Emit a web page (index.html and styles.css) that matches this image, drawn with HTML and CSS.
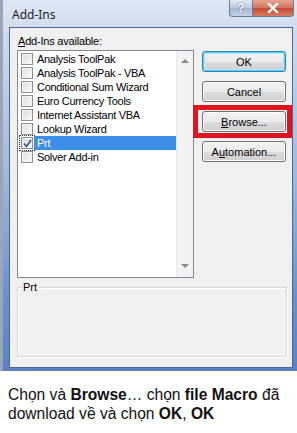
FILE: index.html
```html
<!DOCTYPE html>
<html lang="vi">
  <head>
    <meta charset="UTF-8" />
    <meta name="viewport" content="width=device-width, initial-scale=1.0" />
    <title>Add-Ins</title>
    <link rel="stylesheet" href="styles.css">
  </head>
  <body>
    <div class="dialog">
      <div class="titlebar">
        <span class="title">Add-Ins</span>
        <div class="controls">
          <span class="help">?</span>
          <span class="close">
            <svg width="12" height="10" viewBox="0 0 12 10">
              <path d="M2 1 L10 9 M10 1 L2 9" stroke="#fff" stroke-width="2.4" stroke-linecap="square" />
            </svg>
          </span>
        </div>
      </div>

      <div class="client">
        <div class="top">
          <div class="left">
            <p class="label"><u>A</u>dd-Ins available:</p>
            <div class="listbox">
              <ul class="items">
                <li><span class="box"></span><span class="name">Analysis ToolPak</span></li>
                <li><span class="box"></span><span class="name">Analysis ToolPak - VBA</span></li>
                <li><span class="box"></span><span class="name">Conditional Sum Wizard</span></li>
                <li><span class="box"></span><span class="name">Euro Currency Tools</span></li>
                <li><span class="box"></span><span class="name">Internet Assistant VBA</span></li>
                <li><span class="box"></span><span class="name">Lookup Wizard</span></li>
                <li class="selected">
                  <span class="box checked">
                    <svg width="9" height="9" viewBox="0 0 9 9">
                      <path d="M1 4.5 L3.5 7.5 L8 1" fill="none" stroke="#2a4f9a" stroke-width="1.6" />
                    </svg>
                  </span>
                  <span class="name">Prt</span>
                </li>
                <li><span class="box"></span><span class="name">Solver Add-in</span></li>
              </ul>
              <div class="scrollbar">
                <span class="arrow up"></span>
                <span class="arrow down"></span>
              </div>
            </div>
          </div>

          <div class="buttons">
            <button class="default">OK</button>
            <button>Cancel</button>
            <button class="marked"><u>B</u>rowse...</button>
            <button>A<u>u</u>tomation...</button>
          </div>
        </div>

        <fieldset class="group">
          <legend>Prt</legend>
        </fieldset>
      </div>
    </div>

    <p class="caption">Chọn và <b>Browse</b>… chọn <b>file Macro</b> đã<br>download về và chọn <b>OK</b>, <b>OK</b></p>
  </body>
</html>
```

FILE: styles.css
```css
* {
  margin: 0;
  padding: 0;
  box-sizing: border-box;
}
body {
  background: #fff;
  font-family: "Liberation Sans", Arial, sans-serif;
}
.dialog {
  width: 297px;
  height: 371px;
  border-left: 3px solid #9aa6b8;
  padding-right: 4px;
  padding-bottom: 3px;
  padding-left: 6px;
  background: linear-gradient(#dde6f3 0, #cbd9ec 40px, #9db7dc 180px, #6a8fca 300px, #5a82c4 100%);
  display: flex;
  flex-direction: column;
}
.titlebar {
  height: 27px;
  display: flex;
  justify-content: space-between;
  margin-left: -6px;
  margin-right: -1px;
}
.title {
  padding-left: 9px;
  align-self: center;
  font-family: "Noto Sans", "Liberation Sans", sans-serif;
  font-size: 12px;
  color: #1e1e1e;
  padding-top: 1px;
}
.controls {
  display: flex;
  height: 17px;
}
.controls span {
  display: flex;
  align-items: center;
  justify-content: center;
  height: 17px;
  border: 1px solid #6a7d98;
  border-top: none;
}
.help {
  width: 24px;
  border-radius: 0 0 0 4px;
  background: linear-gradient(#e3ebf5, #b8c9df 50%, #a4b8d3 51%, #c2d2e6);
  color: #fff;
  font-size: 12px;
  font-weight: bold;
  text-shadow: 0 0 2px #3c5478;
}
.close {
  width: 41px;
  border-left: none !important;
  border-radius: 0 0 4px 0;
  background: linear-gradient(#e8a493, #d0735e 50%, #c24a32 51%, #d87c62);
}
.client {
  flex: 1;
  background: #f0f0f0;
  border: 1px solid #4a6796;
  padding: 7px 0 0 7px;
}
.top {
  display: flex;
}
.left {
  width: 177px;
}
.label {
  font-size: 11px;
  line-height: 13px;
  letter-spacing: -0.2px;
  padding-left: 1px;
  margin-bottom: 2px;
  color: #000;
}
.listbox {
  height: 228px;
  border: 1px solid #828790;
  background: #fff;
  display: flex;
}
.items {
  list-style: none;
  flex: 1;
  padding-top: 1px;
}
.items li {
  display: flex;
  align-items: center;
  height: 14px;
  padding-left: 3px;
  font-size: 11px;
  letter-spacing: -0.3px;
  color: #000;
}
.box {
  width: 12px;
  height: 12px;
  border: 1px solid #8f8f8f;
  background: linear-gradient(135deg, #dcdcdc, #fbfbfb);
  box-shadow: inset 0 0 0 1px #f4f4f4;
  display: flex;
  align-items: center;
  justify-content: center;
}
.box.checked {
  outline: 1px dotted #333;
  outline-offset: 1px;
}
.name {
  flex: 1;
  height: 14px;
  line-height: 14px;
  padding-left: 3px;
  margin-left: 1px;
}
.selected .name {
  background: #3d8ee8;
  color: #fff;
}
.scrollbar {
  width: 17px;
  background: #f2f2f2;
  border-left: 1px solid #e6e6e6;
  display: flex;
  flex-direction: column;
  justify-content: space-between;
  align-items: center;
  padding: 8px 0 9px;
}
.arrow {
  width: 0;
  height: 0;
  border-left: 4px solid transparent;
  border-right: 4px solid transparent;
}
.arrow.up {
  border-bottom: 4px solid #8c8c8c;
}
.arrow.down {
  border-top: 4px solid #8c8c8c;
}
.buttons {
  margin-left: 8px;
  padding-top: 16px;
  width: 84px;
  display: flex;
  flex-direction: column;
  gap: 9px;
}
.buttons button {
  position: relative;
  height: 21px;
  border: 1px solid #707070;
  border-radius: 3px;
  background: linear-gradient(#f2f2f2, #ebebeb 50%, #dddddd 51%, #cfcfcf);
  box-shadow: inset 0 0 0 1px #fbfbfb;
  font-family: "Liberation Sans", Arial, sans-serif;
  font-size: 11px;
  color: #000;
}
.buttons button.default {
  border-color: #3c7fb1;
  box-shadow: inset 0 0 0 1px #48d6fb, inset 0 0 0 2px #b6e6f8;
}
.buttons button.marked::after {
  content: "";
  position: absolute;
  left: -10px;
  right: -7px;
  top: -7px;
  bottom: -7px;
  border: 5px solid #e0141e;
}
.group {
  margin-top: 3px;
  width: 270px;
  height: 76px;
  border: 1px solid #d5d9de;
  box-shadow: inset 1px 1px #fff, 1px 1px #fff;
}
.group legend {
  margin-left: 4px;
  padding: 0 1px;
  font-size: 11px;
  line-height: 13px;
  color: #000;
}
.caption {
  margin-top: 14px;
  padding-left: 8px;
  font-family: "Liberation Sans", Arial, sans-serif;
  font-size: 15.6px;
  line-height: 19px;
  color: #111;
}
```
